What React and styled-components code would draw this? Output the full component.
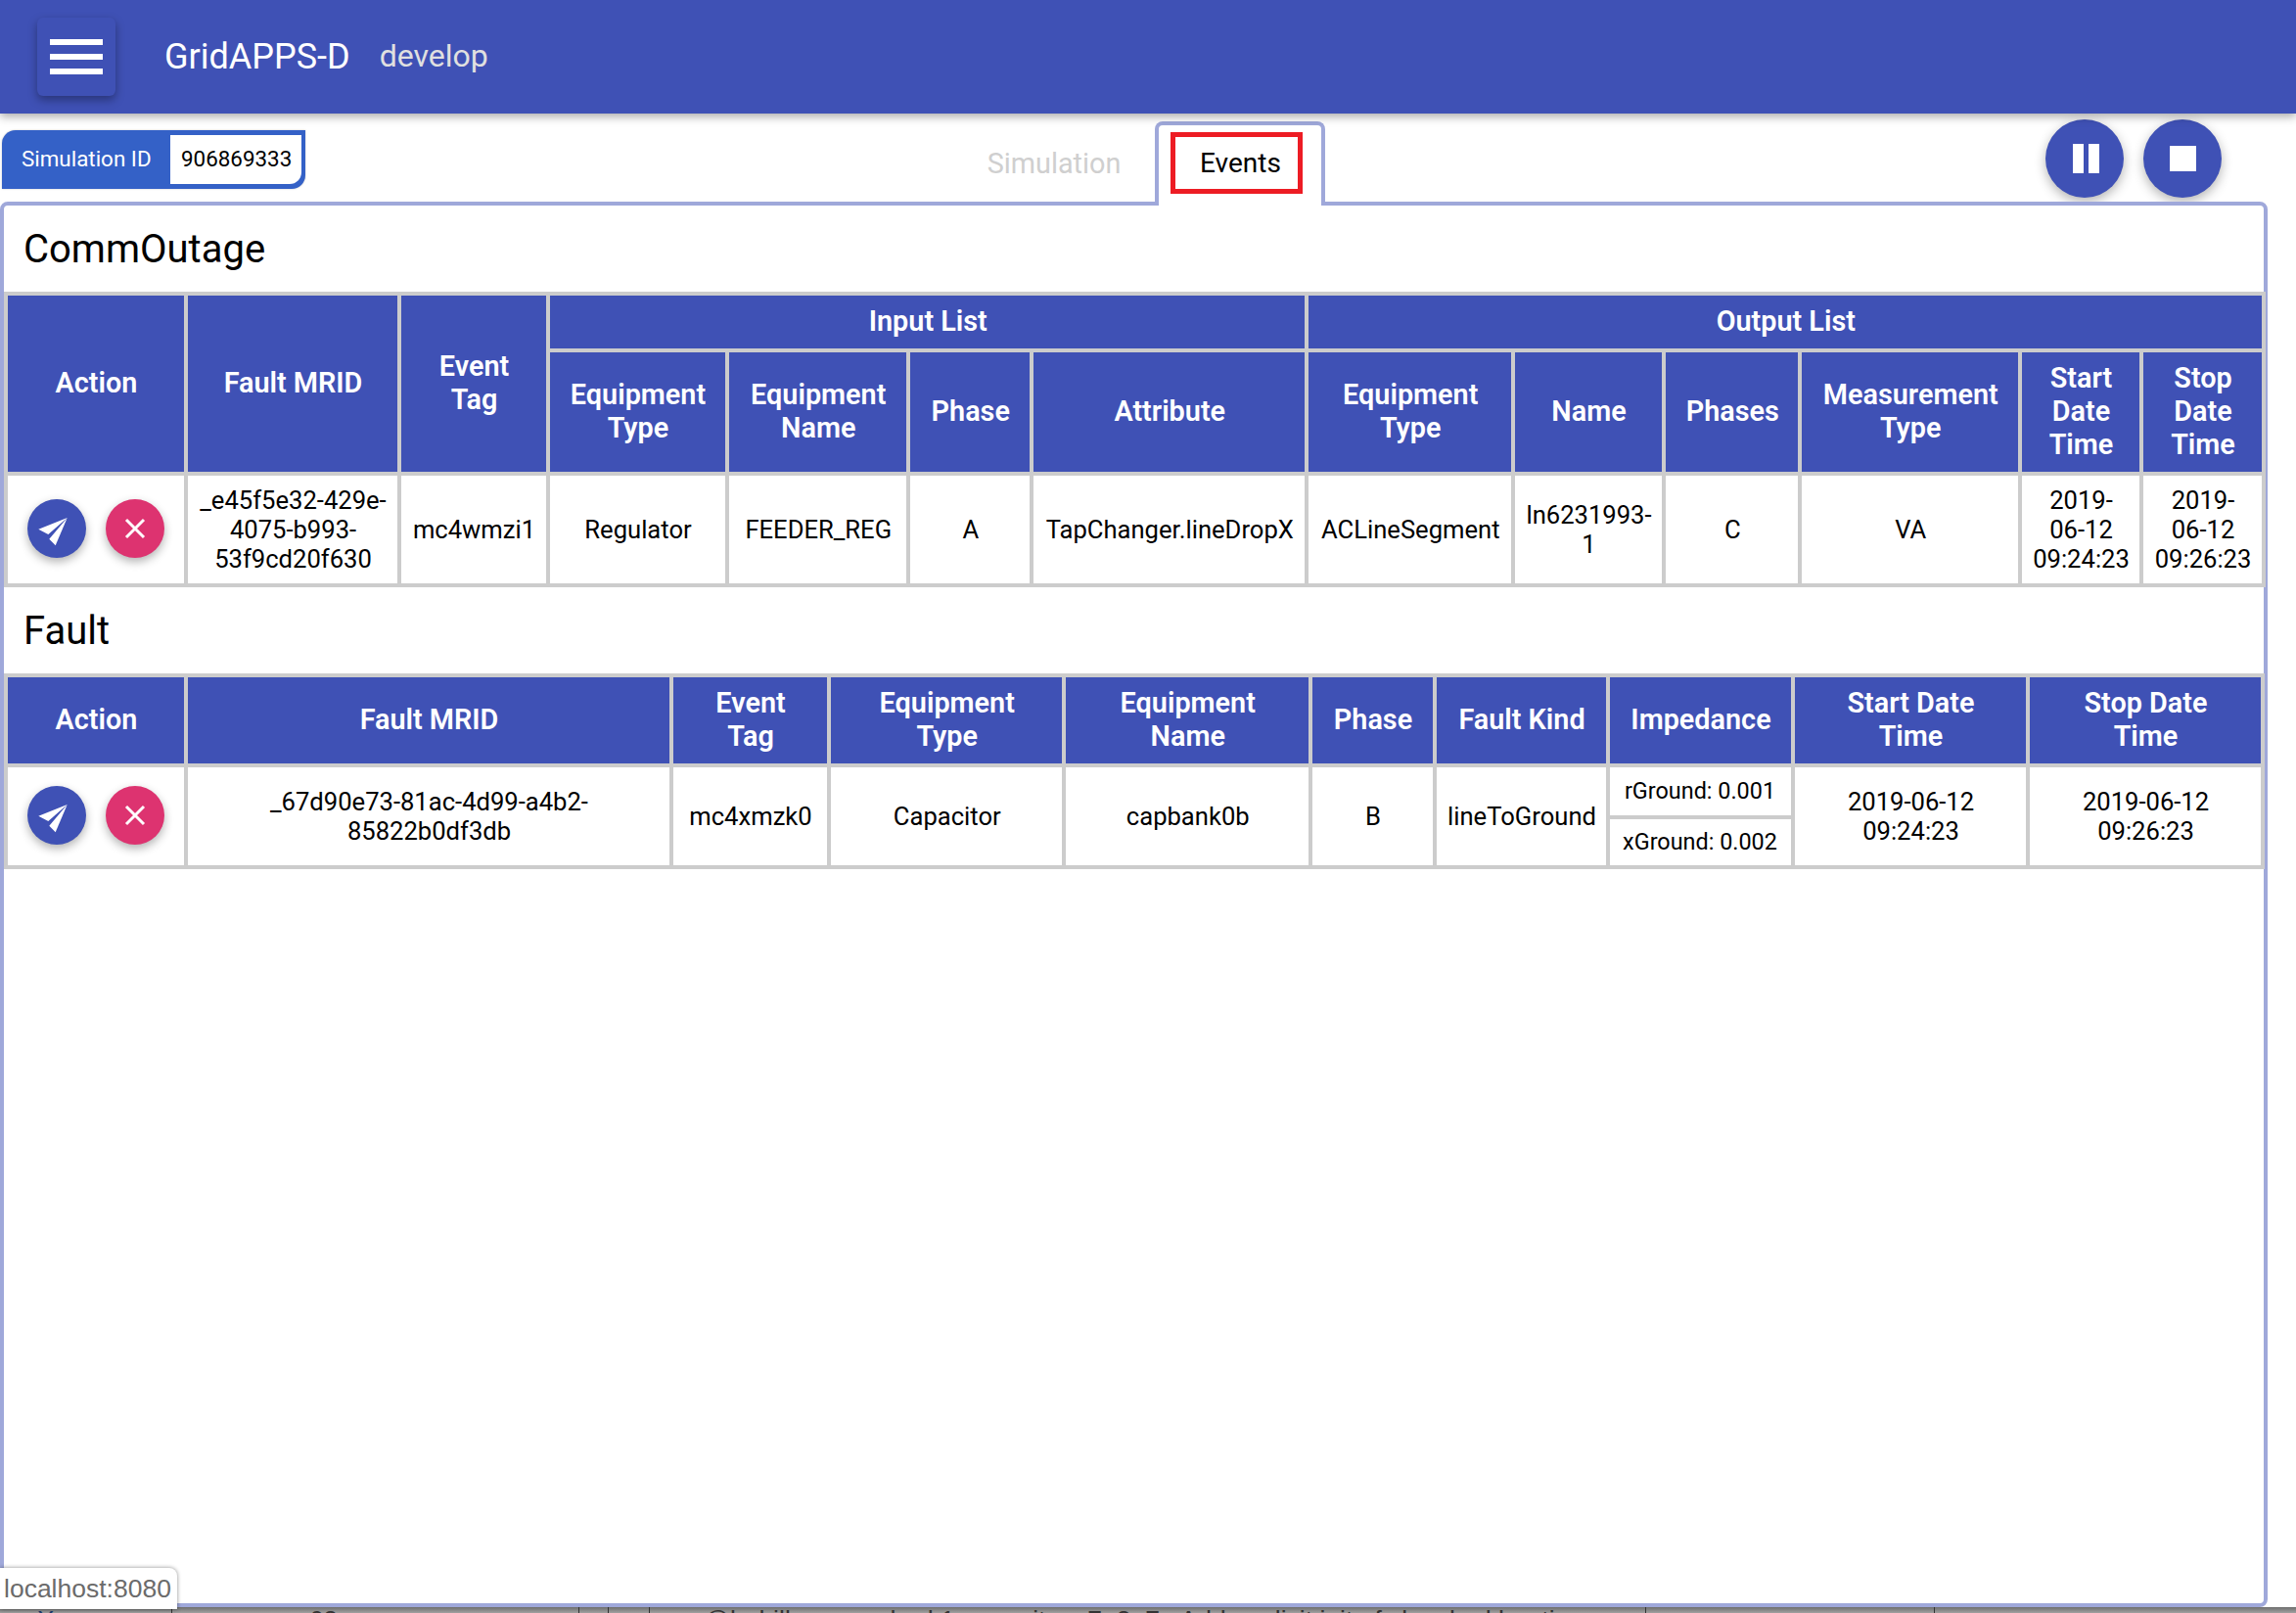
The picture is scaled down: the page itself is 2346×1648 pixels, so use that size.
import React from "react";
import styled, { createGlobalStyle } from "styled-components";

const commOutageCols = [184, 218, 152, 183, 185.5, 125.5, 281.5, 210.5, 154, 139.5, 224.5, 124, 125];
const faultCols = [184, 496, 161, 240.5, 251.5, 127, 177, 189, 240, 240];

const commOutageRow = [
  "_e45f5e32-429e-\n4075-b993-\n53f9cd20f630",
  "mc4wmzi1",
  "Regulator",
  "FEEDER_REG",
  "A",
  "TapChanger.lineDropX",
  "ACLineSegment",
  "ln6231993-\n1",
  "C",
  "VA",
  "2019-\n06-12\n09:24:23",
  "2019-\n06-12\n09:26:23",
];

export default function App() {
  return (
    <Page>
      <GlobalStyle />
      <Header>
        <MenuButton aria-label="menu">
          <MenuBar />
          <MenuBar />
          <MenuBar />
        </MenuButton>
        <AppName>GridAPPS-D</AppName>
        <Version>develop</Version>
      </Header>

      <Toolbar>
        <SimulationId>
          <SimulationLabel>Simulation ID</SimulationLabel>
          <SimulationValue>906869333</SimulationValue>
        </SimulationId>
        <Tabs>
          <Tab>Simulation</Tab>
          <ActiveTab>
            <TabHighlight>Events</TabHighlight>
          </ActiveTab>
        </Tabs>
        <Controls>
          <Fab aria-label="pause">
            <svg width="80" height="80" viewBox="0 0 80 80">
              <rect x="28" y="25" width="11" height="30" fill="#fff" />
              <rect x="44" y="25" width="11" height="30" fill="#fff" />
            </svg>
          </Fab>
          <Fab aria-label="stop">
            <svg width="80" height="80" viewBox="0 0 80 80">
              <rect x="27" y="27" width="27" height="26" fill="#fff" />
            </svg>
          </Fab>
        </Controls>
      </Toolbar>

      <Panel>
        <SectionTitle>CommOutage</SectionTitle>
        <Table>
          <colgroup>
            {commOutageCols.map((w, i) => (
              <col key={i} width={w} />
            ))}
          </colgroup>
          <thead>
            <Row $h={58}>
              <th rowSpan={2}>Action</th>
              <th rowSpan={2}>Fault MRID</th>
              <th rowSpan={2}>Event Tag</th>
              <th colSpan={4}>Input List</th>
              <th colSpan={6}>Output List</th>
            </Row>
            <Row $h={126}>
              <th>Equipment Type</th>
              <th>Equipment Name</th>
              <th>Phase</th>
              <th>Attribute</th>
              <th>Equipment Type</th>
              <th>Name</th>
              <th>Phases</th>
              <th>Measurement Type</th>
              <th>Start Date Time</th>
              <th>Stop Date Time</th>
            </Row>
          </thead>
          <tbody>
            <Row $h={114}>
              <td>
                <RowActions />
              </td>
              {commOutageRow.map((text, i) => (
                <td key={i}>{text}</td>
              ))}
            </Row>
          </tbody>
        </Table>

        <SectionTitle>Fault</SectionTitle>
        <Table>
          <colgroup>
            {faultCols.map((w, i) => (
              <col key={i} width={w} />
            ))}
          </colgroup>
          <thead>
            <Row $h={92}>
              <th>Action</th>
              <th>Fault MRID</th>
              <th>Event Tag</th>
              <th>Equipment Type</th>
              <th>Equipment Name</th>
              <th>Phase</th>
              <th>Fault Kind</th>
              <th>Impedance</th>
              <th>Start Date Time</th>
              <th>Stop Date Time</th>
            </Row>
          </thead>
          <tbody>
            <Row $h={103}>
              <td>
                <RowActions />
              </td>
              <td>{"_67d90e73-81ac-4d99-a4b2-\n85822b0df3db"}</td>
              <td>mc4xmzk0</td>
              <td>Capacitor</td>
              <td>capbank0b</td>
              <td>B</td>
              <td>lineToGround</td>
              <ImpedanceCell>
                <ImpedanceLine>rGround: 0.001</ImpedanceLine>
                <ImpedanceLine $divided>xGround: 0.002</ImpedanceLine>
              </ImpedanceCell>
              <td>{"2019-06-12\n09:24:23"}</td>
              <td>{"2019-06-12\n09:26:23"}</td>
            </Row>
          </tbody>
        </Table>
      </Panel>

      {/* bit of the window behind the browser, cut off by the screenshot */}
      <BehindWindow>
        <Strip $w={175}>
          <StripMark>X</StripMark>
        </Strip>
        <Strip $w={416} $ruled>
          <StripCount>68</StripCount>
        </Strip>
        <Strip $w={30} $ruled />
        <Strip $w={42} $ruled />
        <Strip $w={1018} $ruled>
          <StripText>@bnhillman pushed 1 commit ↑ e7e8a7e Add explicit init of cloacked heating</StripText>
        </Strip>
        <Strip $w={295} $ruled />
        <Strip $w={10} $ruled />
      </BehindWindow>

      <StatusTooltip>localhost:8080</StatusTooltip>
    </Page>
  );
}

function RowActions() {
  return (
    <ActionButtons>
      <ActionButton $color="#3f51b5" aria-label="send">
        <svg width="60" height="60" viewBox="0 0 60 60">
          <path d="M40.7 19 11.3 30.7 21.3 36Z" fill="#fff" />
          <path d="M40.7 19 22.3 40.7 28.7 47.3Z" fill="#fff" />
        </svg>
      </ActionButton>
      <ActionButton $color="#dd3370" aria-label="remove">
        <svg width="60" height="60" viewBox="0 0 60 60">
          <path d="M21 21 39 39M39 21 21 39" stroke="#fff" strokeWidth="3" fill="none" />
        </svg>
      </ActionButton>
    </ActionButtons>
  );
}

// - Styled Components - //
const GlobalStyle = createGlobalStyle`
  html, body {
    margin: 0;
    background: #fff;
  }
  * {
    box-sizing: border-box;
  }
`;

const Page = styled.div`
  position: relative;
  width: 2346px;
  height: 1648px;
  overflow: hidden;
  display: flex;
  flex-direction: column;
  font-family: Roboto, sans-serif;
  color: #000;
`;

// Header
const Header = styled.header`
  position: relative;
  z-index: 2;
  flex: 0 0 116px;
  display: flex;
  align-items: center;
  padding-left: 38px;
  background: #3f51b5;
  box-shadow: 0 3px 9px rgba(0, 0, 0, 0.35);
`;
const MenuButton = styled.button`
  width: 80px;
  height: 80px;
  display: flex;
  flex-direction: column;
  align-items: center;
  justify-content: center;
  gap: 9px;
  padding: 0;
  border: none;
  border-radius: 6px;
  background: #3f51b5;
  box-shadow: 0 4px 10px rgba(0, 0, 0, 0.35);
`;
const MenuBar = styled.span`
  width: 54px;
  height: 6px;
  background: #fff;
`;
const AppName = styled.span`
  margin-left: 50px;
  font-size: 36px;
  color: #fff;
`;
const Version = styled.span`
  margin-left: 30px;
  padding-bottom: 2px;
  font-size: 32px;
  color: #e0e0e0;
`;

// Toolbar
const Toolbar = styled.div`
  flex: 0 0 90px;
  min-height: 0;
  display: flex;
  align-items: flex-start;
  padding-left: 2px;
`;
const SimulationId = styled.div`
  width: 310px;
  height: 60px;
  margin-top: 17px;
  display: flex;
  padding: 5px 4px 5px 0;
  background: #3461c7;
  border-radius: 14px 0 14px 0;
  box-shadow: 0 0 2px rgba(0, 0, 0, 0.25);
  font-size: 22.4px;
`;
const SimulationLabel = styled.span`
  width: 172px;
  display: flex;
  align-items: center;
  padding: 0 0 2px 20px;
  color: #fff;
`;
const SimulationValue = styled.span`
  flex: 1;
  display: flex;
  align-items: center;
  padding: 0 0 2px 11px;
  background: #fff;
  border-radius: 0 0 12px 0;
`;
const Tabs = styled.div`
  display: flex;
  align-items: flex-start;
  gap: 17px;
  margin-left: 679px;
  font-size: 28px;
`;
const Tab = styled.div`
  width: 172px;
  height: 86px;
  margin-top: 8px;
  display: flex;
  align-items: center;
  justify-content: center;
  font-size: 28.8px;
  color: #cfcfcf;
`;
const ActiveTab = styled.div`
  position: relative;
  z-index: 1;
  width: 174px;
  height: 86px;
  margin-top: 8px;
  padding: 7px 18px 0 12px;
  background: #fff;
  border: 4px solid #9fa8da;
  border-bottom: none;
  border-radius: 8px 8px 0 0;
`;
const TabHighlight = styled.div`
  width: 135px;
  height: 63px;
  display: flex;
  align-items: center;
  padding-left: 25px;
  border: 5px solid #ed1c24;
`;
const Controls = styled.div`
  margin-left: auto;
  margin-right: 76px;
  margin-top: 6px;
  display: flex;
  gap: 20px;
`;
const Fab = styled.button`
  width: 80px;
  height: 80px;
  padding: 0;
  border: none;
  border-radius: 50%;
  background: #3f51b5;
  box-shadow: 0 4px 12px rgba(0, 0, 0, 0.3);
  svg {
    display: block;
  }
`;

// Panel
const Panel = styled.main`
  flex: 0 0 1436px;
  width: 2317px;
  border: 4px solid #9fa8da;
  border-radius: 8px;
  background: #fff;
`;
const SectionTitle = styled.h2`
  height: 88px;
  margin: 0;
  padding-left: 20px;
  display: flex;
  align-items: center;
  font-size: 40px;
  font-weight: 400;
`;
const Table = styled.table`
  table-layout: fixed;
  width: 2306px;
  margin-left: -0.5px;
  border-collapse: collapse;
  text-align: center;
  font-size: 25.6px;

  th,
  td {
    padding: 0 3px 0 5px;
    border: 4px solid #ccc;
    white-space: pre-line;
  }
  th {
    padding: 0 19px 3px 21px;
    background: #3f51b5;
    color: #fff;
    font-size: 28.8px;
    font-weight: 600;
  }
`;
const Row = styled.tr`
  height: ${(p) => p.$h}px;
`;
const ActionButtons = styled.div`
  display: flex;
  justify-content: center;
  gap: 20px;
  padding-bottom: 2px;
  margin-left: -1px;
`;
const ActionButton = styled.button`
  width: 60px;
  height: 60px;
  padding: 0;
  border: none;
  border-radius: 50%;
  background: ${(p) => p.$color};
  box-shadow: 0 4px 10px rgba(0, 0, 0, 0.3);
  svg {
    display: block;
  }
`;
const ImpedanceCell = styled.td`
  && {
    padding: 0;
  }
`;
const ImpedanceLine = styled.div`
  height: ${(p) => (p.$divided ? 51.5 : 48.5)}px;
  display: flex;
  align-items: center;
  justify-content: center;
  font-size: 23.4px;
  border-top: ${(p) => (p.$divided ? "4px solid #ccc" : "none")};
`;

// Behind the browser window
const BehindWindow = styled.div`
  flex: 1;
  display: flex;
  overflow: hidden;
  background: linear-gradient(#6e6e6e, #a0a0a0);
`;
const Strip = styled.div`
  flex: 0 0 ${(p) => p.$w}px;
  overflow: hidden;
  white-space: nowrap;
  border-left: ${(p) => (p.$ruled ? "1px solid #333" : "none")};
`;
const StripMark = styled.span`
  margin-left: 38px;
  font: 26px/26px "Liberation Sans", sans-serif;
  color: #1c3a6e;
`;
const StripCount = styled.span`
  margin-left: 140px;
  font: 26px/26px "Liberation Sans", sans-serif;
  color: #333;
`;
const StripText = styled.span`
  display: block;
  margin-left: 55px;
  font: 26.5px/26px "Liberation Sans", sans-serif;
  color: #333;
`;

// Browser status bubble, lies over the page
const StatusTooltip = styled.div`
  position: absolute;
  left: 0;
  top: 1602px;
  width: 181px;
  height: 42px;
  padding-left: 4px;
  display: flex;
  align-items: center;
  background: #fff;
  border-radius: 0 8px 0 0;
  box-shadow: 0 0 4px rgba(0, 0, 0, 0.45);
  font: 26.5px "Liberation Sans", sans-serif;
  color: #6b6b6b;
`;
